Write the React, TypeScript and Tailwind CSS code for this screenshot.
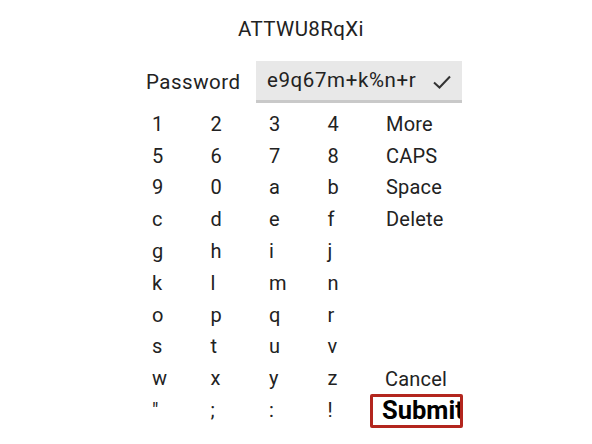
import React from "react";

const rows: string[][] = [
  ["1", "2", "3", "4", "More"],
  ["5", "6", "7", "8", "CAPS"],
  ["9", "0", "a", "b", "Space"],
  ["c", "d", "e", "f", "Delete"],
  ["g", "h", "i", "j", ""],
  ["k", "l", "m", "n", ""],
  ["o", "p", "q", "r", ""],
  ["s", "t", "u", "v", ""],
  ["w", "x", "y", "z", ""],
  ['"', ";", ":", "!", ""],
];

export default function App() {
  return (
    <div
      className="w-[592px] h-[444px] bg-white text-[#222] overflow-hidden flex flex-col"
      style={{ fontFamily: "Roboto, 'Noto Sans', sans-serif" }}
    >
      <div className="mt-[15px] h-[28px] text-[20.5px] leading-[28px] tracking-[0.4px] text-center pl-[10px]">ATTWU8RqXi</div>
      <div className="mt-[18px] flex items-center ml-[146px]">
        <div className="text-[20.5px] w-[110px] tracking-[0.5px]">Password</div>
        <div className="w-[206px] h-[42px] bg-[#e8e8e8] border-b-[3px] border-[#c9c9c9] flex items-center pl-[11px] pr-[10px] text-[20.5px]">
          <span className="flex-1 tracking-[0.6px]">e9q67m+k%n+r</span>
          <svg width="20" height="16" viewBox="0 0 20 16" className="mt-[2px]">
            <path d="M2 8.5 L7.5 13.5 L18 2.5" fill="none" stroke="#333" strokeWidth="2" />
          </svg>
        </div>
      </div>
      <div className="mt-[5px] flex flex-col ml-[152px]">
        {rows.map((r, i) => {
          const last = i >= 8;
          return (
            <div key={i} className="flex h-[31.8px] items-center text-[20px]">
              {r.slice(0, 4).map((c, j) => (
                <div key={j} className="w-[58.5px]">{c}</div>
              ))}
              {!last && <div className="w-[92px] tracking-[0.2px]">{r[4]}</div>}
              {i === 8 && (
                <div className="w-[92px] -ml-[16px] text-center pt-[2px] tracking-[0.2px]">Cancel</div>
              )}
              {i === 9 && (
                <div className="w-[93px] h-[34px] -ml-[16px] mt-[1px] rounded-[2px] border-[3px] border-[#b3261e] flex items-center pl-[9px] overflow-hidden text-[25.5px] font-bold text-black whitespace-nowrap">
                  Submit
                </div>
              )}
            </div>
          );
        })}
      </div>
    </div>
  );
}
